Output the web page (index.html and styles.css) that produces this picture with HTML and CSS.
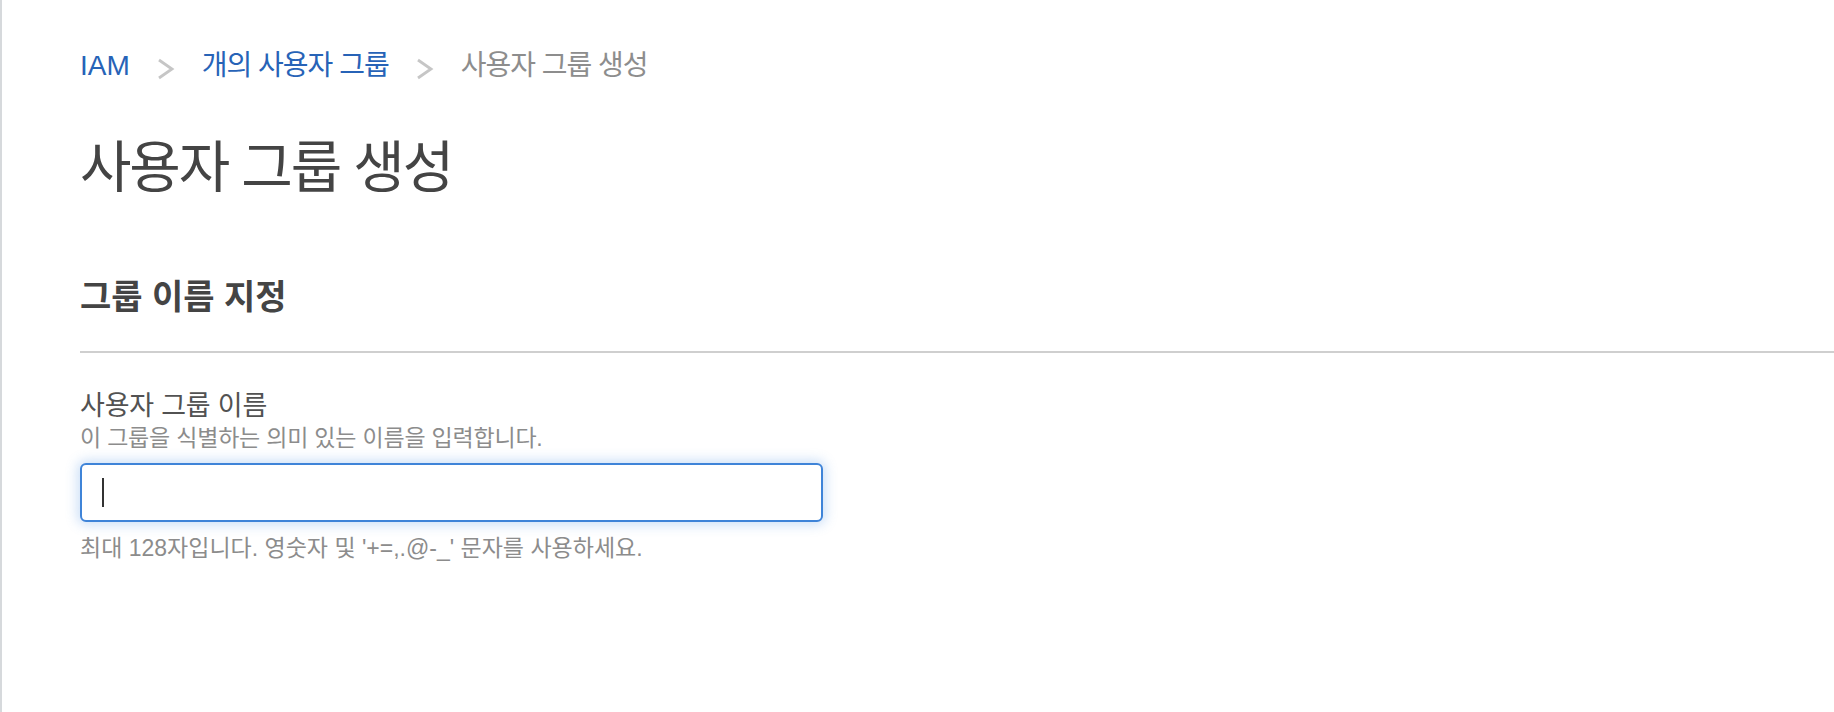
FILE: index.html
```html
<!DOCTYPE html>
<html lang="ko">
<head>
<meta charset="utf-8">
<title>사용자 그룹 생성</title>
<link rel="stylesheet" href="styles.css">
</head>
<body>
<div class="page">
  <nav class="crumbs">
    <a class="crumb crumb-link crumb-latin">IAM</a>
    <svg class="chev" width="18" height="22" viewBox="0 0 18 22"><polyline points="2,2 15,11 2,20" fill="none" stroke="#c6c6c6" stroke-width="2.8" stroke-linejoin="miter"/></svg>
    <a class="crumb crumb-link">개의 사용자 그룹</a>
    <svg class="chev" width="18" height="22" viewBox="0 0 18 22"><polyline points="2,2 15,11 2,20" fill="none" stroke="#c6c6c6" stroke-width="2.8" stroke-linejoin="miter"/></svg>
    <span class="crumb crumb-current">사용자 그룹 생성</span>
  </nav>
  <h1 class="title">사용자 그룹 생성</h1>
  <section class="panel">
    <h2 class="panel-title">그룹 이름 지정</h2>
    <div class="field">
      <div class="label">사용자 그룹 이름</div>
      <div class="desc">이 그룹을 식별하는 의미 있는 이름을 입력합니다.</div>
      <div class="input"><span class="caret"></span></div>
      <div class="hint">최대 128자입니다. 영숫자 및 '+=,.@-_' 문자를 사용하세요.</div>
    </div>
  </section>
</div>
</body>
</html>
```

FILE: styles.css
```css
html, body {
  margin: 0;
  padding: 0;
  background: #ffffff;
}

body {
  font-family: "Liberation Sans", "Noto Sans CJK KR", sans-serif;
  color: #444444;
}

.page {
  min-height: 712px;
  box-sizing: border-box;
  border-left: 2px solid #d6d9dc;
  padding: 46px 0 0 78px;
}

.crumbs {
  display: flex;
  align-items: center;
  gap: 27px;
  height: 40px;
}

.crumb {
  font-size: 28px;
  line-height: 40px;
  letter-spacing: -1px;
  text-decoration: none;
  white-space: nowrap;
}

.crumb-latin {
  letter-spacing: 0;
}

.crumb-link {
  color: #2763b7;
}

.crumb-current {
  color: #8d8d8d;
}

.chev {
  display: block;
  margin-top: 6px;
  flex: none;
}

.title {
  margin: 50px 0 0 0;
  font-size: 56px;
  line-height: 64px;
  font-weight: normal;
  letter-spacing: -2.2px;
  color: #444444;
}

.panel {
  margin-top: 75px;
}

.panel-title {
  margin: 0;
  padding-bottom: 32px;
  border-bottom: 2px solid #cfcfcf;
  font-size: 34px;
  line-height: 44px;
  font-weight: bold;
  letter-spacing: 0;
  color: #444444;
}

.field {
  padding-top: 36px;
  display: flex;
  flex-direction: column;
  align-items: flex-start;
}

.label {
  font-size: 27px;
  line-height: 34px;
  letter-spacing: -0.2px;
  color: #525252;
}

.desc {
  font-size: 23px;
  line-height: 30px;
  letter-spacing: -0.2px;
  color: #8c8c8c;
}

.input {
  margin-top: 10px;
  width: 743px;
  height: 59px;
  box-sizing: border-box;
  border: 2px solid #3f84d8;
  border-radius: 6px;
  box-shadow: 0 0 12px 3px rgba(74, 144, 226, 0.28);
  padding: 0 0 0 20px;
  display: flex;
  align-items: center;
  background: #ffffff;
}

.caret {
  display: block;
  width: 2px;
  height: 29px;
  background: #333333;
}

.hint {
  margin-top: 11px;
  font-size: 23px;
  line-height: 30px;
  letter-spacing: 0;
  color: #8c8c8c;
}
```
